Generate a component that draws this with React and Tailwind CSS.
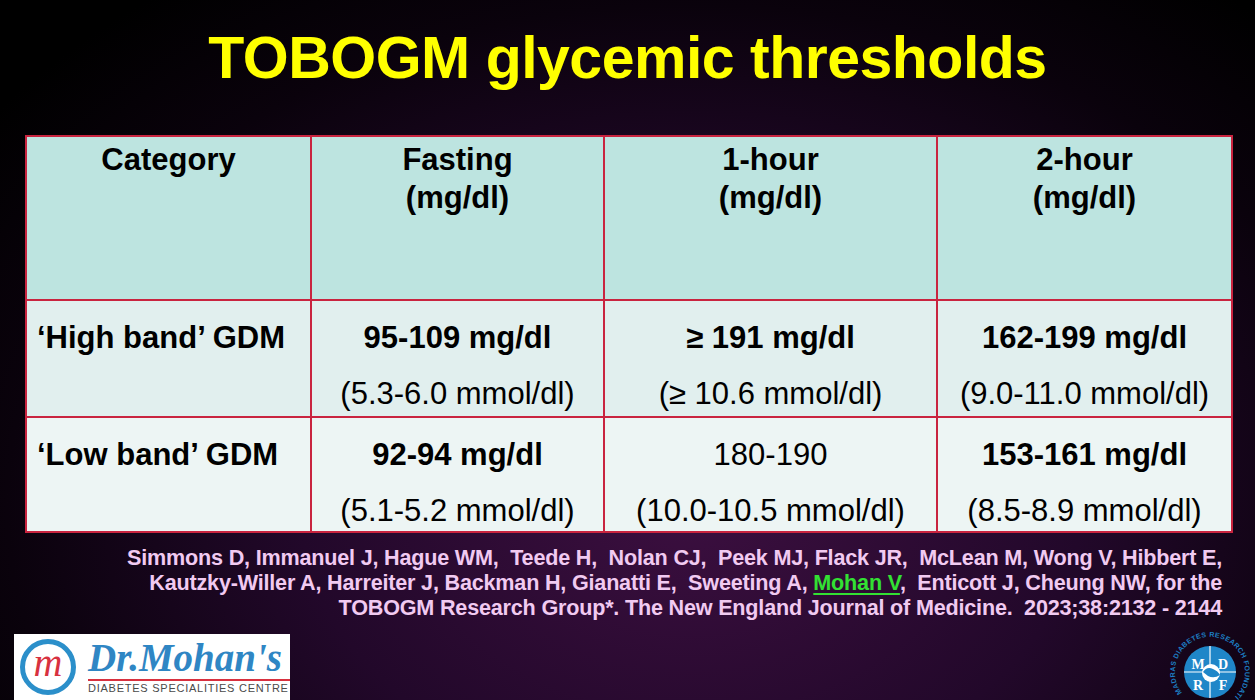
import React from 'react';

const rows = [
  {
    label: '\u2018High band\u2019 GDM',
    cells: [
      { main: '95-109 mg/dl', bold: true, sub: '(5.3-6.0 mmol/dl)' },
      { main: '\u2265 191 mg/dl', bold: true, sub: '(\u2265 10.6 mmol/dl)' },
      { main: '162-199 mg/dl', bold: true, sub: '(9.0-11.0 mmol/dl)' },
    ],
    bg: 'bg-[#e1efee]',
    h: 'h-[115px]',
  },
  {
    label: '\u2018Low band\u2019 GDM',
    cells: [
      { main: '92-94 mg/dl', bold: true, sub: '(5.1-5.2 mmol/dl)' },
      { main: '180-190', bold: false, sub: '(10.0-10.5 mmol/dl)' },
      { main: '153-161 mg/dl', bold: true, sub: '(8.5-8.9 mmol/dl)' },
    ],
    bg: 'bg-[#edf5f4]',
    h: 'h-[113px]',
  },
];

const heads = [
  ['Category'],
  ['Fasting', '(mg/dl)'],
  ['1-hour', '(mg/dl)'],
  ['2-hour', '(mg/dl)'],
];

const MohansLogo = () => (
  <div className="flex items-center bg-white w-[276px] h-[66px] pl-[6px] overflow-hidden">
    <div className="w-[56px] h-[56px] rounded-full border-[5px] border-[#2b8fca] bg-white flex items-center justify-center shrink-0">
      <span className="text-[#d8313f] italic text-[40px] leading-none -mt-[8px] font-['Liberation_Serif',serif]">m</span>
    </div>
    <div className="flex flex-col ml-[12px]">
      <span className="text-[#2f86c4] italic font-bold text-[39px] leading-[40px] font-['Liberation_Serif',serif] whitespace-nowrap">
        Dr.Mohan's
      </span>
      <div className="h-[2px] bg-[#d8313f] w-[202px] mt-[1px]" />
      <span className="text-[#4a4a4a] text-[11px] leading-[15px] tracking-[0.75px] font-['Liberation_Sans',sans-serif] whitespace-nowrap">
        DIABETES SPECIALITIES CENTRE
      </span>
    </div>
  </div>
);

const MdrfLogo = () => (
  <svg width="90" height="72" viewBox="0 0 90 72" className="shrink-0">
    <defs>
      <path id="ring" d="M 20.3 68.7 A 35 35 0 1 1 69.7 68.7" />
    </defs>
    <text fontSize="7" fontWeight="bold" fill="#1d7fc4" fontFamily="Liberation Sans, sans-serif" letterSpacing="0.4">
      <textPath href="#ring" startOffset="3%">MADRAS DIABETES RESEARCH FOUNDATION</textPath>
    </text>
    <circle cx="45" cy="44" r="26" fill="#1f86c8" />
    <line x1="45" y1="18" x2="45" y2="70" stroke="white" strokeWidth="1.2" />
    <line x1="19" y1="44" x2="71" y2="44" stroke="white" strokeWidth="1.2" />
    <circle cx="46" cy="45" r="9" fill="white" />
    <path d="M38 44 q4 -6 10 -3 q5 2 7 6 q-6 4 -12 1 z" fill="#1f86c8" />
    <text x="33" y="41" fontSize="14" fontWeight="bold" fill="white" fontFamily="Liberation Serif, serif" textAnchor="middle">M</text>
    <text x="58" y="41" fontSize="14" fontWeight="bold" fill="white" fontFamily="Liberation Serif, serif" textAnchor="middle">D</text>
    <text x="33" y="62" fontSize="14" fontWeight="bold" fill="white" fontFamily="Liberation Serif, serif" textAnchor="middle">R</text>
    <text x="58" y="62" fontSize="14" fontWeight="bold" fill="white" fontFamily="Liberation Serif, serif" textAnchor="middle">F</text>
  </svg>
);

const App = () => {
  return (
    <div className="w-[1255px] h-[700px] overflow-hidden flex flex-col bg-[radial-gradient(ellipse_at_55%_72%,#3c0f40_0%,#22082a_40%,#0a020c_70%,#000_90%)] font-['Liberation_Sans',Arial,sans-serif]">
      {/* Title */}
      <h1 className="pt-[25px] text-center text-[#ffff00] font-bold text-[59px] leading-[66px] tracking-[-0.5px]">
        TOBOGM glycemic thresholds
      </h1>

      {/* Table */}
      <div className="mt-[44px] ml-[25px] w-[1208px] grid grid-cols-[283px_291px_331px_293px] gap-[2px] p-[2px] bg-[#c9243f] text-black">
        {heads.map((lines, i) => (
          <div key={i} className="bg-[#bde4e0] h-[162px] pt-[4px] text-center font-bold text-[31px] leading-[38px]">
            {lines.map((l) => (
              <div key={l}>{l}</div>
            ))}
          </div>
        ))}

        {rows.map((row) => (
          <React.Fragment key={row.label}>
            <div className={`${row.bg} ${row.h} pl-[10px] pt-[19px] font-bold text-[31px] leading-[36px] whitespace-nowrap`}>
              {row.label}
            </div>
            {row.cells.map((c) => (
              <div key={c.main} className={`${row.bg} ${row.h} pt-[19px] text-center text-[31px] leading-[36px] whitespace-nowrap`}>
                <div className={c.bold ? 'font-bold' : ''}>{c.main}</div>
                <div className="mt-[20px]">{c.sub}</div>
              </div>
            ))}
          </React.Fragment>
        ))}
      </div>

      {/* Citation */}
      <div className="mt-[12px] pr-[33px] text-right text-[#f1caf1] font-bold text-[21.6px] leading-[25px] tracking-[-0.2px] whitespace-pre">
        <div>Simmons D, Immanuel J, Hague WM,  Teede H,  Nolan CJ,  Peek MJ, Flack JR,  McLean M, Wong V, Hibbert E,</div>
        <div>
          Kautzky-Willer A, Harreiter J, Backman H, Gianatti E,  Sweeting A,{' '}
          <span className="text-[#33e033] underline underline-offset-[3px]">Mohan V</span>,  Enticott J, Cheung NW, for the
        </div>
        <div>TOBOGM Research Group*. The New England Journal of Medicine.  2023;38:2132 - 2144</div>
      </div>

      {/* Footer logos */}
      <div className="mt-auto flex items-end justify-between pl-[14px] pr-0">
        <MohansLogo />
        <MdrfLogo />
      </div>
    </div>
  );
};

export default App;
